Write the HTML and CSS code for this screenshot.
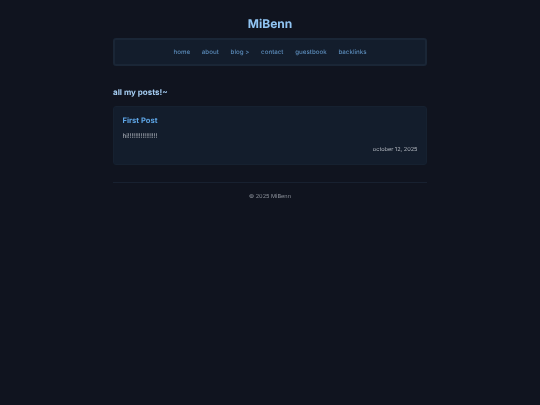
FILE: index.html
```html
<!DOCTYPE html>
<html lang="en">
<head>
  <meta charset="UTF-8">
  <meta name="viewport" content="width=device-width, initial-scale=1.0">
  <title>MiBenn</title>
  <link rel="stylesheet" href="styles.css">
</head>
<body>
  <div class="container">
    <h1 class="site-title">MiBenn</h1>
    <nav class="nav">
      <a href="#">home</a>
      <a href="#">about</a>
      <a href="#">blog &gt;</a>
      <a href="#">contact</a>
      <a href="#">guestbook</a>
      <a href="#">backlinks</a>
    </nav>
    <h2 class="section-title">all my posts!~</h2>
    <div class="post">
      <h3 class="post-title">First Post</h3>
      <p class="post-body">hi!!!!!!!!!!!!!!!!</p>
      <div class="post-date">october 12, 2025</div>
    </div>
    <footer class="footer">© 2025 MiBenn</footer>
  </div>
</body>
</html>
```

FILE: styles.css
```css
html, body {
  margin: 0;
  padding: 0;
  height: 100%;
  background-color: #10141f;
}
body {
  font-family: "Inter", "Noto Sans", sans-serif;
  color: #c3c8d0;
  text-rendering: geometricPrecision;
}
.container {
  width: 314px;
  margin: 0 auto;
  padding-top: 16px;
  will-change: transform; /* grey text edges, like the reference */
}
.site-title {
  margin: 0;
  height: 22px;
  line-height: 16px;
  font-size: 12px;
  font-weight: 700;
  text-align: center;
  color: #90c4f2;
}
.nav {
  box-sizing: border-box;
  height: 28px;
  display: flex;
  justify-content: center;
  align-items: center;
  gap: 11.8px;
  background: #131d2c;
  border: 2px solid #1a2636;
  border-radius: 3px;
}
.nav a {
  font-size: 6.2px;
  font-weight: 500;
  color: #5a8ab8;
  text-decoration: none;
}
.section-title {
  margin: 21px 0 8px;
  line-height: 11px;
  font-size: 8px;
  font-weight: 700;
  color: #a5cdf2;
}
.post {
  box-sizing: border-box;
  height: 59px;
  padding: 9px 8.5px 0;
  background: #131d2c;
  border: 1px solid #162130;
  border-radius: 3px;
}
.post-title {
  margin: 0;
  line-height: 10px;
  font-size: 7.6px;
  font-weight: 700;
  color: #5da4e4;
}
.post-body {
  margin: 5px 0 0;
  line-height: 10px;
  font-size: 6.4px;
  color: #b4b9c1;
}
.post-date {
  margin-top: 4px;
  line-height: 10px;
  font-size: 5.6px;
  text-align: right;
  color: #b4b9c1;
}
.footer {
  margin-top: 17px;
  padding-top: 10px;
  border-top: 1px solid #182130;
  line-height: 9px;
  font-size: 5.6px;
  text-align: center;
  color: #8d929b;
}
```
